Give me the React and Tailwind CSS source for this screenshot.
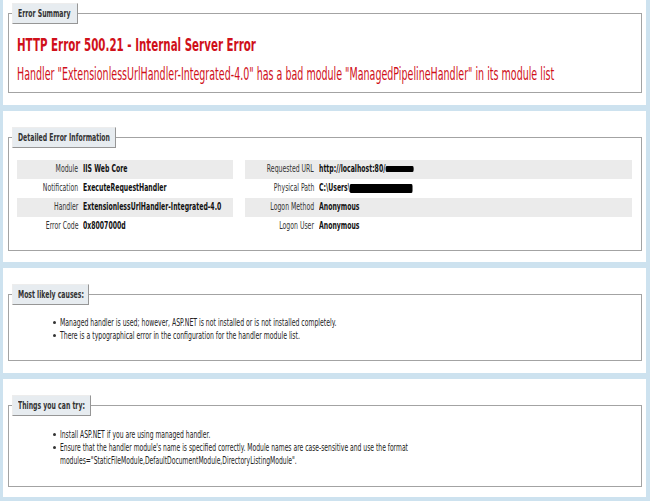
import React from "react";

// text is drawn narrow, so every run of text goes through one of these
const SQ = "inline-block shrink-0 whitespace-nowrap origin-left scale-x-[0.56]";
const SQ_R = "inline-block shrink-0 whitespace-nowrap origin-right scale-x-[0.56]";

const Legend = ({ width, children }) => (
    <legend
        className={`${width} h-[21px] ml-0 border border-t-[#ededed] border-l-[#ededed] border-r-[#969696] border-b-[#969696] bg-[#e7ecf0] pl-[5px] text-[11px] leading-[19px] font-bold text-[#333333]`}
    >
        <span className={SQ}>{children}</span>
    </legend>
);

const Panel = ({ className, children }) => (
    <div className={`overflow-hidden bg-white pl-[5px] pr-[4px] ${className}`}>{children}</div>
);

const Redacted = ({ className }) => (
    <span className={`inline-block align-middle bg-black rounded-[2px] ${className}`} />
);

const Bullet = () => <span className="mt-[5px] h-[3px] w-[3px] shrink-0 rounded-full bg-[#333333]" />;

const leftRows = [
    { label: "Module", value: "IIS Web Core" },
    { label: "Notification", value: "ExecuteRequestHandler" },
    { label: "Handler", value: "ExtensionlessUrlHandler-Integrated-4.0" },
    { label: "Error Code", value: "0x8007000d" }
];

const rightRows = [
    { label: "Requested URL", value: "http://localhost:80/", blot: "w-[50px] h-[6px]" },
    { label: "Physical Path", value: "C:\\Users\\", blot: "w-[112px] h-[9px]" },
    { label: "Logon Method", value: "Anonymous" },
    { label: "Logon User", value: "Anonymous" }
];

const DetailTable = ({ rows, width, labelWidth }) => (
    <div className={`${width} shrink-0 flex flex-col overflow-hidden`}>
        {rows.map((row, i) => (
            <div
                key={row.label}
                className={`flex h-[19px] items-center gap-[5px] ${i % 2 === 0 ? "bg-[#ebebeb]" : ""}`}
            >
                <div className={`${labelWidth} shrink-0 flex justify-end text-[#333333]`}>
                    <span className={SQ_R}>{row.label}</span>
                </div>
                <div className="flex min-w-0 font-bold text-[#111111]">
                    <span className={SQ}>
                        {row.value}
                        {row.blot && <Redacted className={row.blot} />}
                    </span>
                </div>
            </div>
        ))}
    </div>
);

export default function App() {
    return (
        <div className="min-h-[501px] overflow-hidden bg-[#cde2ef] pl-[3px] pr-[4px] flex flex-col gap-[6px] font-['DejaVu_Sans',sans-serif] text-[11px]">
            {/* Error Summary */}
            <Panel className="pt-[3px] pb-[12px]">
                <fieldset className="min-w-0 border border-[#a3a3a3] pl-[3px] pb-[8px]">
                    <Legend width="w-[66px]">Error Summary</Legend>
                    <div className="pl-[5px] text-[#d0101a]">
                        <h2 className="mt-[10px] text-[18.4px] leading-[22px] font-bold">
                            <span className={SQ}>HTTP Error 500.21 - Internal Server Error</span>
                        </h2>
                        <h3 className="mt-[9px] text-[17px] leading-[19px]">
                            <span className={SQ}>
                                Handler "ExtensionlessUrlHandler-Integrated-4.0" has a bad module "ManagedPipelineHandler" in its module list
                            </span>
                        </h3>
                    </div>
                </fieldset>
            </Panel>

            {/* Detailed Error Information */}
            <Panel className="pt-[16px] pb-[11px]">
                <fieldset className="min-w-0 border border-[#a3a3a3] pl-[3px] pb-[14px]">
                    <Legend width="w-[104px]">Detailed Error Information</Legend>
                    <div className="mt-[12px] flex gap-[12px] pl-[5px]">
                        <DetailTable rows={leftRows} width="w-[216px]" labelWidth="w-[61px]" />
                        <DetailTable rows={rightRows} width="w-[387px]" labelWidth="w-[69px]" />
                    </div>
                </fieldset>
            </Panel>

            {/* Most likely causes */}
            <Panel className="pt-[16px] pb-[12px]">
                <fieldset className="min-w-0 border border-[#a3a3a3] pl-[3px] pb-[18px]">
                    <Legend width="w-[77px]">Most likely causes:</Legend>
                    <ul className="mt-[11px] pl-[41px] text-[#222222] leading-[13px] overflow-hidden">
                        <li className="flex gap-[4px]">
                            <Bullet />
                            <span className={SQ}>
                                Managed handler is used; however, ASP.NET is not installed or is not installed completely.
                            </span>
                        </li>
                        <li className="flex gap-[4px]">
                            <Bullet />
                            <span className={SQ}>
                                There is a typographical error in the configuration for the handler module list.
                            </span>
                        </li>
                    </ul>
                </fieldset>
            </Panel>

            {/* Things you can try */}
            <Panel className="pt-[16px] pb-[10px]">
                <fieldset className="min-w-0 border border-[#a3a3a3] pl-[3px] pb-[19px]">
                    <Legend width="w-[79px]">Things you can try:</Legend>
                    <ul className="mt-[12px] pl-[41px] text-[#222222] text-[10.8px] leading-[13px] overflow-hidden">
                        <li className="flex gap-[4px]">
                            <Bullet />
                            <span className={SQ}>Install ASP.NET if you are using managed handler.</span>
                        </li>
                        <li className="flex gap-[4px]">
                            <Bullet />
                            <span className={SQ}>
                                Ensure that the handler module's name is specified correctly. Module names are case-sensitive and use the format
                                <br />
                                modules="StaticFileModule,DefaultDocumentModule,DirectoryListingModule".
                            </span>
                        </li>
                    </ul>
                </fieldset>
            </Panel>
        </div>
    );
}
